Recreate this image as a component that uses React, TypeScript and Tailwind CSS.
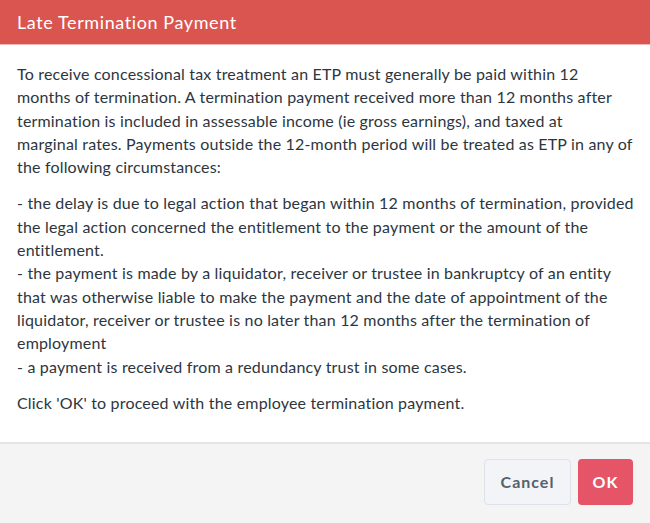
export default function App() {
  return (
    <div
      className="flex h-[523px] w-[650px] flex-col overflow-hidden bg-white text-[#2d3640]"
      style={{ fontFamily: 'Lato, "Noto Sans", sans-serif' }}
    >
      {/* Header */}
      <div className="flex h-[45px] shrink-0 items-center border-b border-[#f0b9b6] bg-[#da5550] px-[17px]">
        <h2 className="text-[18px] font-normal tracking-[0.6px] text-white">Late Termination Payment</h2>
      </div>

      {/* Body — lines broken as in the original dialog */}
      <div className="flex-1 pl-[17px] pr-[6px] pt-[17px] text-[16px] leading-[23.3px] tracking-[0.18px]">
        <p>
          To receive concessional tax treatment an ETP must generally be paid within 12
          <br />
          months of termination. A termination payment received more than 12 months after
          <br />
          termination is included in assessable income (ie gross earnings), and taxed at
          <br />
          marginal rates. Payments outside the 12-month period will be treated as ETP in any of
          <br />
          the following circumstances:
        </p>
        <p className="mt-[13px]">
          - the delay is due to legal action that began within 12 months of termination, provided
          <br />
          the legal action concerned the entitlement to the payment or the amount of the
          <br />
          entitlement.
          <br />
          - the payment is made by a liquidator, receiver or trustee in bankruptcy of an entity
          <br />
          that was otherwise liable to make the payment and the date of appointment of the
          <br />
          liquidator, receiver or trustee is no later than 12 months after the termination of
          <br />
          employment
          <br />- a payment is received from a redundancy trust in some cases.
        </p>
        <p className="mt-[13px]">Click 'OK' to proceed with the employee termination payment.</p>
      </div>

      {/* Footer */}
      <div className="flex h-[81px] shrink-0 items-center justify-end gap-[7px] border-t-2 border-[#e4e4e4] bg-[#f4f4f4] px-[17px]">
        <button className="-mt-[3px] h-[46px] w-[87px] rounded-[4px] border border-[#dde2e8] bg-[#f2f4f7] text-[16px] font-bold tracking-[1px] text-[#56606b]">
          Cancel
        </button>
        <button className="-mt-[3px] h-[46px] w-[55px] rounded-[4px] bg-[#e55567] text-[16px] font-bold tracking-[1px] text-white">
          OK
        </button>
      </div>
    </div>
  )
}
